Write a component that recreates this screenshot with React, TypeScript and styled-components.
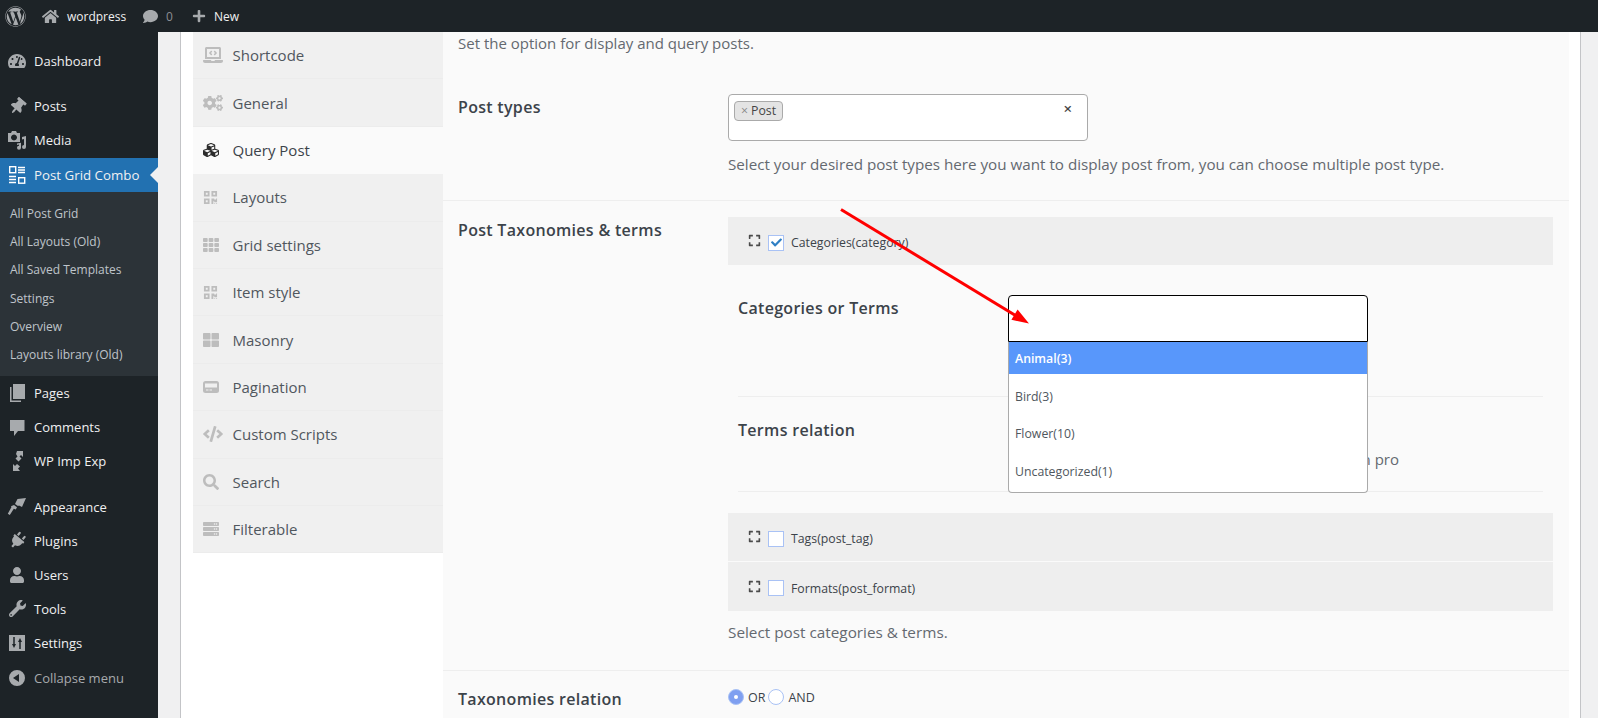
import React from 'react';
import styled, { createGlobalStyle } from 'styled-components';
import {
  FaWordpress, FaHome, FaComment, FaPlus, FaTachometerAlt, FaThumbtack, FaPlug, FaUser, FaWrench,
  FaLaptopCode, FaCogs, FaCubes, FaQrcode, FaTh, FaThLarge, FaCode, FaSearch, FaServer, FaExpand, FaCheck,
} from 'react-icons/fa';

const FONT = `"Open Sans", "Noto Sans", "Liberation Sans", sans-serif`;

const Global = createGlobalStyle`
  html, body { margin: 0; padding: 0; background: #f0f0f1; overflow: hidden; }
  body { font-family: ${FONT}; }
  * { box-sizing: border-box; }
`;

const Page = styled.div`
  position: relative;
  width: 1598px;
  height: 718px;
  overflow: hidden;
`;

const TopBar = styled.header`
  height: 32px;
  background: #1d2327;
  color: #f0f0f1;
  display: flex;
  align-items: center;
  font-size: 12px;
`;

const BarItem = styled.div<{ $w: number }>`
  width: ${p => p.$w}px;
  display: flex;
  align-items: center;
  gap: 8px;
  padding-left: 5px;
  svg { color: #a7aaad; flex: none; }
`;

const Muted = styled.span`
  color: #8c8f94;
`;

const Body = styled.div`
  display: flex;
  height: 686px;
`;

const Sidebar = styled.nav`
  width: 158px;
  flex: none;
  background: #1d2327;
  padding-top: 12px;
`;

const MenuItem = styled.div<{ $active?: boolean; $dim?: boolean; $tall?: boolean }>`
  position: relative;
  height: ${p => (p.$tall ? 35 : 34)}px;
  margin-top: ${p => (p.$active ? 1 : 0)}px;
  display: flex;
  align-items: center;
  background: ${p => (p.$active ? '#2271b1' : 'transparent')};
  color: ${p => (p.$dim ? '#a7aaad' : '#f0f0f1')};
  font-size: ${p => (p.$active ? 13.3 : 13)}px;
`;

const MenuIcon = styled.span<{ $active?: boolean }>`
  width: 34px;
  flex: none;
  display: flex;
  justify-content: center;
  color: ${p => (p.$active ? '#fff' : '#a7aaad')};
`;

const MenuArrow = styled.span`
  position: absolute;
  right: 0;
  top: 9px;
  border: 8px solid transparent;
  border-right-color: #f0f0f1;
  border-left-width: 0;
`;

const MenuGap = styled.div<{ $h: number }>`
  height: ${p => p.$h}px;
`;

const SubMenu = styled.div`
  background: #2c3338;
  padding: 7.5px 0 7.5px 10px;
`;

const SubItem = styled.div`
  height: 28.2px;
  display: flex;
  align-items: center;
  font-size: 12px;
  color: rgba(240, 246, 252, 0.75);
`;

const Main = styled.main`
  flex: 1;
  padding-left: 22px;
  min-width: 0;
`;

const Metabox = styled.section`
  width: 1401px;
  height: 100%;
  background: #fff;
  border-left: 1px solid #c3c4c7;
  border-right: 1px solid #c3c4c7;
  padding: 0 11px 0 12px;
  display: flex;
`;

const Tabs = styled.ul`
  width: 250px;
  flex: none;
  margin: 0;
  padding: 0;
  list-style: none;
  align-self: flex-start;
`;

const Tab = styled.li<{ $active?: boolean }>`
  height: 47.4px;
  display: flex;
  align-items: center;
  padding-left: 10px;
  background: ${p => (p.$active ? '#fafafa' : '#f0f0f0')};
  border-bottom: 1px solid ${p => (p.$active ? '#fafafa' : '#ececec')};
  color: ${p => (p.$active ? '#3c434a' : '#50575e')};
  font-size: 15px;
`;

const TabIcon = styled.span<{ $active?: boolean }>`
  width: 29.5px;
  flex: none;
  display: flex;
  color: ${p => (p.$active ? '#2b2b2b' : '#bdbdbd')};
`;

const Panel = styled.div`
  flex: 1;
  background: #fafafa;
  min-width: 0;
`;

const Intro = styled.p`
  margin: 0;
  height: 46px;
  padding: 0 15px;
  line-height: 22px;
  font-size: 15px;
  color: #646970;
`;

const Row = styled.div<{ $top?: number; $bottom?: number }>`
  display: grid;
  grid-template-columns: 270px 825px;
  padding: ${p => p.$top ?? 16}px 15px ${p => p.$bottom ?? 16}px;
  border-bottom: 1px solid #eeeeee;
`;

const Label = styled.h3`
  margin: 0;
  font-size: 16px;
  letter-spacing: 0.3px;
  font-weight: 600;
  line-height: 26px;
  color: #3c434a;
`;

const Hint = styled.p<{ $size?: number; $top?: number }>`
  margin: ${p => p.$top ?? 0}px 0 0;
  font-size: ${p => p.$size ?? 15.2}px;
  line-height: 22px;
  color: #646970;
`;

const TagBox = styled.div`
  position: relative;
  width: 360px;
  height: 47px;
  background: #fff;
  border: 1px solid #aaa;
  border-radius: 4px;
  padding: 3px 5px;
  margin-bottom: 12px;
`;

const Tag = styled.span`
  display: inline-flex;
  align-items: center;
  gap: 3px;
  height: 20px;
  padding: 0 6px;
  background: #e4e4e4;
  border: 1px solid #aaa;
  border-radius: 4px;
  font-size: 12.3px;
  color: #444;
`;

const TagX = styled.span`
  color: #888;
`;

const ClearX = styled.span`
  position: absolute;
  right: 15px;
  top: 3px;
  font-size: 15px;
  line-height: 20px;
  font-weight: 600;
  color: #444;
`;

const AccHead = styled.div<{ $h: number }>`
  height: ${p => p.$h}px;
  display: flex;
  align-items: center;
  padding: 3px 0 0 20px;
  background: #eeeeee;
  margin-bottom: 1px;
  font-size: 12.3px;
  color: #3c434a;
  svg.expand { color: #4a4a4a; flex: none; margin-top: -4px; }
`;

const CheckBox = styled.span`
  width: 16px;
  height: 16px;
  margin: 0 7px 0 7px;
  flex: none;
  background: #fff;
  border: 1px solid #a9c2f5;
  display: flex;
  align-items: center;
  justify-content: center;
  color: #2f7fc4;
`;

const AccBody = styled.div`
  padding: 0 10px;
  margin-bottom: 21px;
`;

const SubRow = styled.div<{ $h: number; $pt: number }>`
  display: grid;
  grid-template-columns: 270px 1fr;
  height: ${p => p.$h}px;
  padding-top: ${p => p.$pt}px;
  border-bottom: 1px solid #eeeeee;
`;

const SelectWrap = styled.div`
  position: relative;
  width: 360px;
`;

const SelectBox = styled.div`
  height: 47px;
  background: #fff;
  border: 1px solid #000;
  border-radius: 4px 4px 0 0;
`;

const Dropdown = styled.ul`
  position: absolute;
  left: 0;
  right: 0;
  top: 47px;
  margin: 0;
  padding: 0;
  list-style: none;
  z-index: 2;
  background: #fff;
  border: 1px solid #aaa;
  border-top: none;
  border-radius: 0 0 4px 4px;
`;

const Option = styled.li<{ $active?: boolean }>`
  height: 32px;
  margin-bottom: 5.5px;
  padding: 1px 0 0 6px;
  display: flex;
  align-items: center;
  font-size: 12.3px;
  background: ${p => (p.$active ? '#5897fb' : 'transparent')};
  color: ${p => (p.$active ? '#fff' : '#50575e')};
  font-weight: ${p => (p.$active ? 600 : 400)};
`;

const SubHint = styled.p`
  margin: 31px 0 0;
  width: 391px;
  text-align: right;
  font-size: 15px;
  line-height: 22px;
  color: #646970;
  white-space: nowrap;
`;

const RadioRow = styled.div`
  display: flex;
  align-items: center;
  height: 18px;
  margin-top: 2px;
  font-size: 12.5px;
  color: #3c434a;
`;

const Radio = styled.span<{ $on?: boolean }>`
  width: 16px;
  height: 16px;
  flex: none;
  border-radius: 50%;
  border: 1px solid #a9c2f5;
  background: ${p => (p.$on ? '#7f9ff0' : '#fff')};
  display: flex;
  align-items: center;
  justify-content: center;
  margin-right: 4px;
  margin-left: ${p => (p.$on ? 0 : 3)}px;
  &::after {
    content: '';
    display: ${p => (p.$on ? 'block' : 'none')};
    width: 4px;
    height: 4px;
    border-radius: 50%;
    background: #fff;
  }
`;

const Annotation = styled.svg`
  position: absolute;
  left: 0;
  top: 0;
  pointer-events: none;
  z-index: 5;
`;

const S = 20;

const MediaIcon = () => (
  <svg width={S} height={S} viewBox="0 0 20 20" fill="currentColor">
    <path d="M1 3h3l1-2h4l1 2h3v9H1z M7 4.500a3 3 0 1 0 0.010 0z" fillRule="evenodd" />
    <path d="M15 7l4-1v11a2 2 0 1 1-2-2V9l-2 .5zM10 13.500l4-.8v5a2 2 0 1 1-2-2v-1.200l-2 .4z" />
  </svg>
);
const GridComboIcon = () => (
  <svg width={S} height={S} viewBox="0 0 20 20" fill="none" stroke="currentColor" strokeWidth="1.400">
    <rect x="2.700" y="1.700" width="6" height="6" />
    <path d="M11 2.500h7M11 5h7M11 7.500h7M2 11.500h7M2 14.500h7M2 17.500h7" />
    <rect x="11.700" y="12.700" width="6" height="5.500" />
  </svg>
);
const PagesIcon = () => (
  <svg width={S} height={S} viewBox="0 0 20 20" fill="currentColor">
    <path d="M6 1h12v15H6z" />
    <path d="M4.500 4v13.500H14V19H3V4z" />
  </svg>
);
const CommentIcon = () => (
  <svg width={S} height={S} viewBox="0 0 20 20" fill="currentColor">
    <path d="M3 3h14.500v11H11l-4 5v-5H3z" />
  </svg>
);
const ImpExpIcon = () => (
  <svg width={S} height={S} viewBox="0 0 20 20" fill="currentColor">
    <path d="M10 0h6v6l-2-2-1.500 1.500 2 2-3 3-3-3 2-2L9 3z" />
    <path d="M6 20v-7l2 2 2-2 3 2.500-2 2 2 2.500z" />
  </svg>
);
const BrushIcon = () => (
  <svg width={S} height={S} viewBox="0 0 20 20" fill="currentColor">
    <path d="M10.500 2l8.500-1-4 9-3-1.500-1 .5-3-2 .6-1.200z" />
    <path d="M7 8l3 2.200-1.200 2.300-2-.7-4 6.200-2-1.300L4.500 10l-.6-.8z" />
  </svg>
);
const SettingsIcon = () => (
  <svg width={S} height={S} viewBox="0 0 20 20">
    <path fill="currentColor" d="M2 2h16v16H2z" />
    <path stroke="#1d2327" strokeWidth="1.500" fill="none" d="M7 4v8M13 8v8" />
    <path fill="#1d2327" d="M5 11h4l-2 4zM11 9h4l-2-4z" />
  </svg>
);
const CollapseIcon = () => (
  <svg width={S} height={S} viewBox="0 0 20 20" fill="currentColor">
    <path fillRule="evenodd" d="M10 2a8 8 0 1 1 0 16 8 8 0 0 1 0-16zM12 6l-6 4 6 4z" />
  </svg>
);
const PaginationIcon = () => (
  <svg width={16} height={16} viewBox="0 0 16 16">
    <rect x="0" y="2" width="16" height="12" rx="2.500" fill="currentColor" />
    <path d="M2 4.500h12v4H2z" fill="#f0f0f0" />
    <path d="M3 11h2.500M6.500 11H9" stroke="#f0f0f0" strokeWidth="1" />
  </svg>
);

const sub = ['All Post Grid', 'All Layouts (Old)', 'All Saved Templates', 'Settings', 'Overview', 'Layouts library (Old)'];

const tabs: { name: string; icon: React.ReactNode; active?: boolean }[] = [
  { name: 'Shortcode', icon: <FaLaptopCode size={20} /> },
  { name: 'General', icon: <FaCogs size={20} /> },
  { name: 'Query Post', icon: <FaCubes size={16} />, active: true },
  { name: 'Layouts', icon: <FaQrcode size={15} /> },
  { name: 'Grid settings', icon: <FaTh size={16} /> },
  { name: 'Item style', icon: <FaQrcode size={15} /> },
  { name: 'Masonry', icon: <FaThLarge size={16} /> },
  { name: 'Pagination', icon: <PaginationIcon /> },
  { name: 'Custom Scripts', icon: <FaCode size={20} /> },
  { name: 'Search', icon: <FaSearch size={16} /> },
  { name: 'Filterable', icon: <FaServer size={16} /> },
];

const Item = ({ icon, label, active, dim, tall }: { icon: React.ReactNode; label: string; active?: boolean; dim?: boolean; tall?: boolean }) => (
  <MenuItem $active={active} $dim={dim} $tall={tall}>
    <MenuIcon $active={active}>{icon}</MenuIcon>
    {label}
    {active && <MenuArrow />}
  </MenuItem>
);

const Acc = ({ label, h, checked }: { label: string; h: number; checked?: boolean }) => (
  <AccHead $h={h}>
    <FaExpand className="expand" size={13} />
    <CheckBox>{checked && <FaCheck size={11} />}</CheckBox>
    {label}
  </AccHead>
);

export default function App() {
  return (
    <Page>
      <Global />
      <TopBar>
        <BarItem $w={37}><FaWordpress size={21} /></BarItem>
        <BarItem $w={101}><FaHome size={17} />wordpress</BarItem>
        <BarItem $w={49}><FaComment size={15} /><Muted>0</Muted></BarItem>
        <BarItem $w={70}><FaPlus size={14} />New</BarItem>
      </TopBar>
      <Body>
        <Sidebar>
          <Item icon={<FaTachometerAlt size={18} />} label="Dashboard" />
          <MenuGap $h={11} />
          <Item icon={<FaThumbtack size={17} style={{ transform: 'rotate(40deg)' }} />} label="Posts" />
          <Item icon={<MediaIcon />} label="Media" />
          <Item icon={<GridComboIcon />} label="Post Grid Combo" active />
          <SubMenu>
            {sub.map(s => <SubItem key={s}>{s}</SubItem>)}
          </SubMenu>
          <Item icon={<PagesIcon />} label="Pages" />
          <Item icon={<CommentIcon />} label="Comments" />
          <Item icon={<ImpExpIcon />} label="WP Imp Exp" />
          <MenuGap $h={11.5} />
          <Item icon={<BrushIcon />} label="Appearance" />
          <Item icon={<FaPlug size={17} style={{ transform: 'rotate(40deg)' }} />} label="Plugins" />
          <Item icon={<FaUser size={16} />} label="Users" />
          <Item icon={<FaWrench size={17} />} label="Tools" />
          <Item icon={<SettingsIcon />} label="Settings" tall />
          <Item icon={<CollapseIcon />} label="Collapse menu" dim />
        </Sidebar>
        <Main>
          <Metabox>
            <Tabs>
              {tabs.map(t => (
                <Tab key={t.name} $active={t.active}>
                  <TabIcon $active={t.active}>{t.icon}</TabIcon>
                  {t.name}
                </Tab>
              ))}
            </Tabs>
            <Panel>
              <Intro>Set the option for display and query posts.</Intro>
              <Row $bottom={25}>
                <Label>Post types</Label>
                <div>
                  <TagBox>
                    <Tag><TagX>×</TagX>Post</Tag>
                    <ClearX>×</ClearX>
                  </TagBox>
                  <Hint>Select your desired post types here you want to display post from, you can choose multiple post type.</Hint>
                </div>
              </Row>
              <Row $bottom={27}>
                <Label>Post Taxonomies &amp; terms</Label>
                <div>
                  <Acc label="Categories(category)" h={48} checked />
                  <AccBody>
                    <SubRow $h={131} $pt={29}>
                      <Label>Categories or Terms</Label>
                      <SelectWrap>
                        <SelectBox />
                        <Dropdown>
                          <Option $active>Animal(3)</Option>
                          <Option>Bird(3)</Option>
                          <Option>Flower(10)</Option>
                          <Option>Uncategorized(1)</Option>
                        </Dropdown>
                      </SelectWrap>
                    </SubRow>
                    <SubRow $h={95} $pt={20}>
                      <Label>Terms relation</Label>
                      <SubHint>Choose terms relation, this option is available in pro</SubHint>
                    </SubRow>
                  </AccBody>
                  <Acc label="Tags(post_tag)" h={48} />
                  <Acc label="Formats(post_format)" h={49} />
                  <Hint $size={15.3} $top={10}>Select post categories &amp; terms.</Hint>
                </div>
              </Row>
              <Row $top={15}>
                <Label>Taxonomies relation</Label>
                <RadioRow><Radio $on />OR<Radio />AND</RadioRow>
              </Row>
            </Panel>
          </Metabox>
        </Main>
      </Body>
      <Annotation width="1598" height="718" viewBox="0 0 1598 718">
        <line x1="841" y1="209.500" x2="1018" y2="317" stroke="#f00" strokeWidth="3" />
        <polygon points="1029,323.500 1011.400,319.800 1017.600,309.600" fill="#f00" />
      </Annotation>
    </Page>
  );
}
